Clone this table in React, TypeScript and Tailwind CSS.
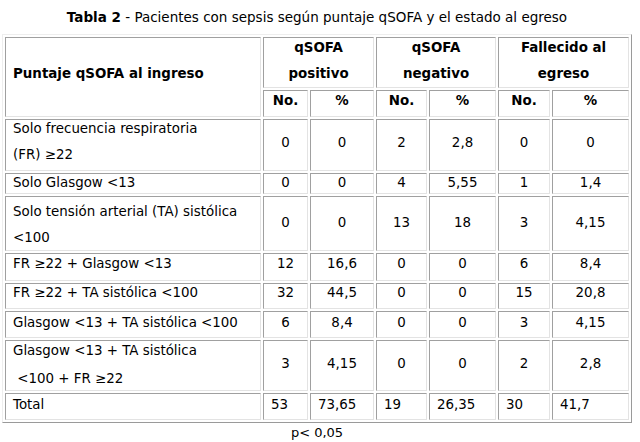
import React from 'react';

type Row = {
  lines: string[];
  values: string[];
  height: string;
  labelPad: string;
  lineGap: string;
  numPad: string;
};

const rows: Row[] = [
  {
    lines: ['Solo frecuencia respiratoria', '(FR) ≥22'],
    values: ['0', '0', '2', '2,8', '0', '0'],
    height: 'h-[52px]',
    labelPad: 'pt-[1px]',
    lineGap: 'mt-[10px]',
    numPad: 'pt-[15px]',
  },
  {
    lines: ['Solo Glasgow <13'],
    values: ['0', '0', '4', '5,55', '1', '1,4'],
    height: 'h-[21px]',
    labelPad: 'pt-[1px]',
    lineGap: '',
    numPad: 'pt-[1px]',
  },
  {
    lines: ['Solo tensión arterial (TA) sistólica', '<100'],
    values: ['0', '0', '13', '18', '3', '4,15'],
    height: 'h-[55px]',
    labelPad: 'pt-[7px]',
    lineGap: 'mt-[10px]',
    numPad: 'pt-[18px]',
  },
  {
    lines: ['FR ≥22 + Glasgow <13'],
    values: ['12', '16,6', '0', '0', '6', '8,4'],
    height: 'h-[28px]',
    labelPad: 'pt-[2px]',
    lineGap: '',
    numPad: 'pt-[2px]',
  },
  {
    lines: ['FR ≥22 + TA sistólica <100'],
    values: ['32', '44,5', '0', '0', '15', '20,8'],
    height: 'h-[26px]',
    labelPad: 'pt-[1px]',
    lineGap: '',
    numPad: 'pt-[1px]',
  },
  {
    lines: ['Glasgow <13 + TA sistólica <100'],
    values: ['6', '8,4', '0', '0', '3', '4,15'],
    height: 'h-[27px]',
    labelPad: 'pt-[3px]',
    lineGap: '',
    numPad: 'pt-[3px]',
  },
  {
    lines: ['Glasgow <13 + TA sistólica', '\u00a0<100 + FR ≥22'],
    values: ['3', '4,15', '0', '0', '2', '2,8'],
    height: 'h-[51px]',
    labelPad: 'pt-[2px]',
    lineGap: 'mt-[12px]',
    numPad: 'pt-[15px]',
  },
];

const totals = ['53', '73,65', '19', '26,35', '30', '41,7'];

const cell =
  'border border-t-[#a0a0a0] border-l-[#a0a0a0] border-b-[#e3e3e3] border-r-[#e3e3e3] p-0 align-top';

export default function App() {
  return (
    <div className="w-[640px] h-[442px] overflow-hidden bg-white text-black font-['DejaVu_Sans',Verdana,sans-serif] text-[13.4px] leading-[16px]">
      <div className="pt-[9px] h-[34px] pr-[6px] text-center text-[13.5px]">
        <span className="font-bold">Tabla 2</span> - Pacientes con sepsis según puntaje qSOFA y el estado al egreso
      </div>
      <table className="ml-[2px] w-[630px] table-fixed border-separate border-spacing-[2px] border border-t-[#eeeeee] border-l-[#eeeeee] border-b-[#9a9a9a] border-r-[#9a9a9a]">
        <colgroup>
          <col className="w-[256px]" />
          <col className="w-[45px]" />
          <col className="w-[64px]" />
          <col className="w-[51px]" />
          <col className="w-[67px]" />
          <col className="w-[52px]" />
          <col />
        </colgroup>
        <thead>
          <tr className="h-[51px]">
            <th rowSpan={2} className={`${cell} text-left font-bold pl-[7px] pt-[28px]`}>
              Puntaje qSOFA al ingreso
            </th>
            {[
              ['qSOFA', 'positivo'],
              ['qSOFA', 'negativo'],
              ['Fallecido al', 'egreso'],
            ].map(([a, b], i) => (
              <th key={i} colSpan={2} className={`${cell} font-bold pt-[2px]`}>
                <div>{a}</div>
                <div className="mt-[10px]">{b}</div>
              </th>
            ))}
          </tr>
          <tr className="h-[27px]">
            {['No.', '%', 'No.', '%', 'No.', '%'].map((h, i) => (
              <th key={i} className={`${cell} font-bold pt-[2px]`}>
                {h}
              </th>
            ))}
          </tr>
        </thead>
        <tbody>
          {rows.map((row, i) => (
            <tr key={i} className={row.height}>
              <td className={`${cell} pl-[7px] text-left ${row.labelPad}`}>
                {row.lines.map((l, k) => (
                  <div key={k} className={k > 0 ? row.lineGap : ''}>
                    {l}
                  </div>
                ))}
              </td>
              {row.values.map((v, j) => (
                <td key={j} className={`${cell} text-center ${row.numPad}`}>
                  {v}
                </td>
              ))}
            </tr>
          ))}
          <tr className="h-[27px]">
            <td className={`${cell} pl-[7px] pt-[3px]`}>Total</td>
            {totals.map((v, j) => (
              <td key={j} className={`${cell} pl-[7px] pt-[3px]`}>
                {v}
              </td>
            ))}
          </tr>
        </tbody>
      </table>
      <div className="text-center text-[13px] pt-[2px] pr-[6px]">p&lt; 0,05</div>
    </div>
  );
}
